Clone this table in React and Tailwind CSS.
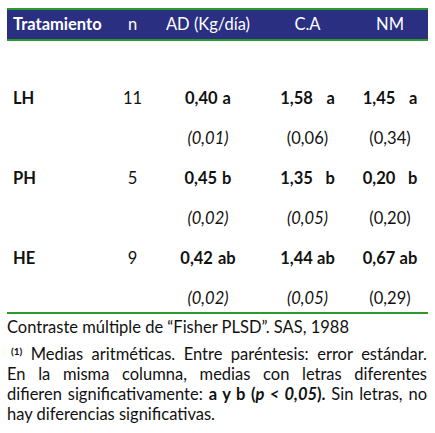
import React from "react";

const rows = [
  { t: "LH", n: "11", ad: ["0,40", "a"], ca: ["1,58", "a"], nm: ["1,45", "a"], se: ["(0,01)", "(0,06)", "(0,34)"], it: [true, false, false] },
  { t: "PH", n: "5", ad: ["0,45", "b"], ca: ["1,35", "b"], nm: ["0,20", "b"], se: ["(0,02)", "(0,05)", "(0,20)"], it: [true, true, false] },
  { t: "HE", n: "9", ad: ["0,42", "ab"], ca: ["1,44", "ab"], nm: ["0,67", "ab"], se: ["(0,02)", "(0,05)", "(0,29)"], it: [true, true, false] },
];

const cols = "grid grid-cols-[103px_45px_106px_93px_72px]";

const Val = ({ v, center }) => (
  <div className="flex justify-center font-bold">
    <span>{v[0]}</span>
    {center ? (
      <span className="ml-[5px]">{v[1]}</span>
    ) : (
      <span className="w-[22px] text-right">{v[1]}</span>
    )}
  </div>
);

const App = () => {
  const line = "block text-justify [text-align-last:justify]";
  return (
    <div
      className="w-[435px] h-[433px] bg-white text-[#111] px-[7px] pt-[8px]"
      style={{ fontFamily: "Lato, 'Liberation Sans', sans-serif" }}
    >
      <div className={`${cols} h-[33px] items-center bg-[#2b2f82] border-y-2 border-[#2a9a2a] text-white text-[16.5px]`}>
        <div className="pl-[6px] font-bold">Tratamiento</div>
        <div className="text-center">n</div>
        <div className="text-center">AD (Kg/día)</div>
        <div className="text-center">C.A</div>
        <div className="text-center">NM</div>
      </div>

      <div className="h-[37px]" />

      <div className="text-[16.5px]">
        {rows.map((r, i) => (
          <React.Fragment key={r.t}>
            <div className={`${cols} h-[40px] items-center`}>
              <div className="pl-[6px] font-bold">{r.t}</div>
              <div className="text-center">{r.n}</div>
              <Val v={r.ad} center />
              <Val v={r.ca} />
              <Val v={r.nm} />
            </div>
            <div className={`${cols} ${i === 2 ? "h-[34px] items-start leading-[40px]" : "h-[40px] items-center"}`}>
              <div />
              <div />
              {r.se.map((s, j) => (
                <div key={j} className={`text-center ${r.it[j] ? "italic" : ""}`}>{s}</div>
              ))}
            </div>
          </React.Fragment>
        ))}
      </div>

      <div className="border-t-2 border-[#2a9a2a]" />

      <p className="text-[16.5px] leading-[26px]">Contraste múltiple de “Fisher PLSD”. SAS, 1988</p>
      <div className="text-[16.5px] leading-[20px] mt-[4px] w-[420px]">
        <span className={`${line} pl-[4px]`}>
          <span className="font-bold text-[10px] align-top leading-[14px]">(1)</span> Medias aritméticas. Entre paréntesis: error estándar.
        </span>
        <span className={line}>En la misma columna, medias con letras diferentes</span>
        <span className={line}>
          difieren significativamente: <b>a y b (<i>p &lt; 0,05</i>).</b> Sin letras, no
        </span>
        <span className="block">hay diferencias significativas.</span>
      </div>
    </div>
  );
};

export default App;
